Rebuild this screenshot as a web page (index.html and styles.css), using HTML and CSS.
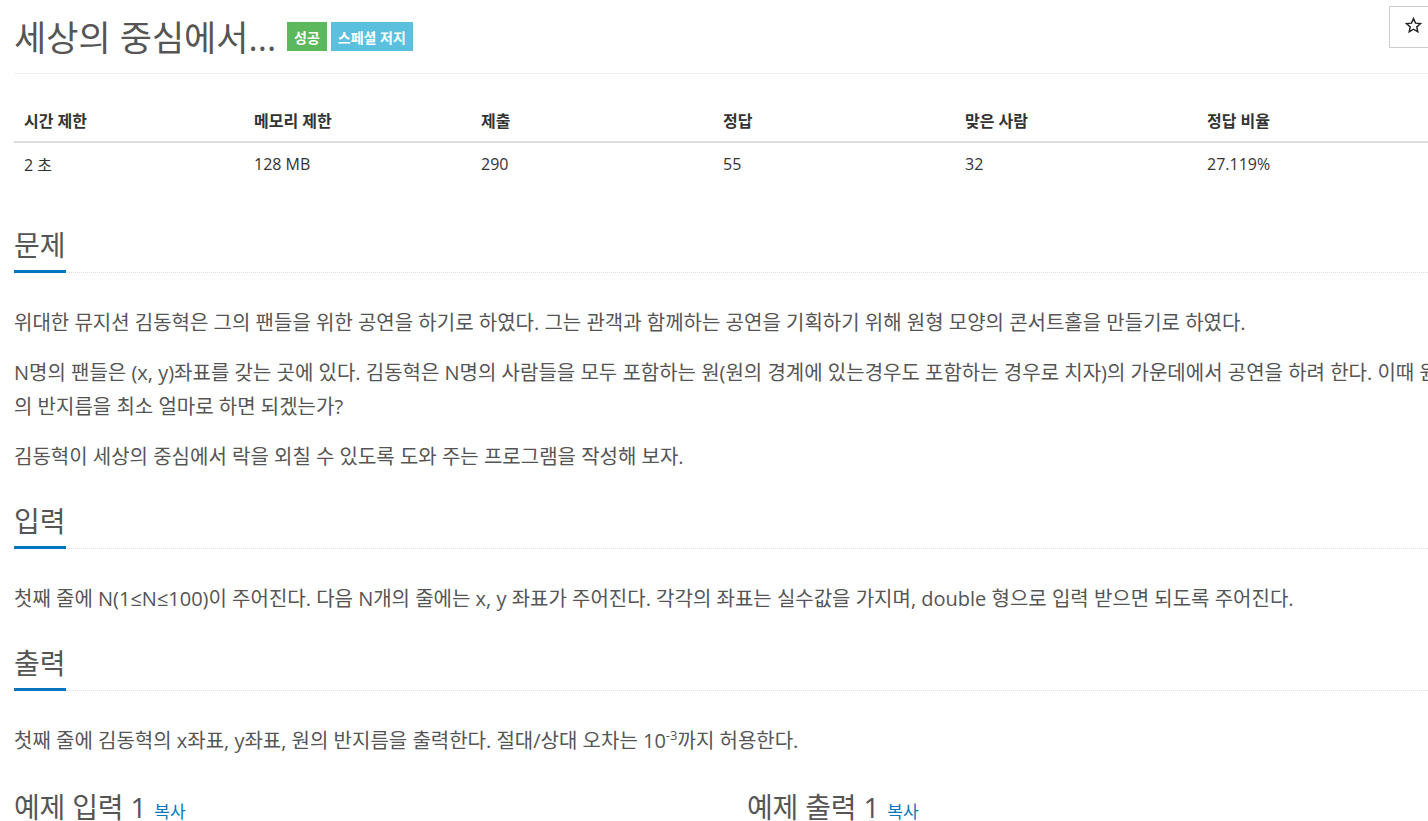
FILE: index.html
```html
<!DOCTYPE html>
<html lang="ko">
<head>
<meta charset="utf-8">
<title>세상의 중심에서...</title>
<link rel="stylesheet" href="styles.css">
</head>
<body>
<div class="page">
  <div class="page-header">
    <h1 class="title">세상의 중심에서...</h1>
    <span class="label label-success">성공</span>
    <span class="label label-info">스페셜 저지</span>
    <button class="star-btn" type="button" aria-label="즐겨찾기">
      <svg class="star-icon" width="17" height="17" viewBox="0 0 24 24" aria-hidden="true">
        <path d="M12 2.2 L14.9 8.6 L21.8 9.3 L16.6 14 L18.1 20.9 L12 17.3 L5.9 20.9 L7.4 14 L2.2 9.3 L9.1 8.6 Z" fill="none" stroke="#222" stroke-width="2" stroke-linejoin="miter"/>
      </svg>
    </button>
  </div>

  <table class="info-table">
    <thead>
      <tr>
        <th class="c1">시간 제한</th>
        <th class="c2">메모리 제한</th>
        <th class="c3">제출</th>
        <th class="c4">정답</th>
        <th class="c5">맞은 사람</th>
        <th class="c6">정답 비율</th>
      </tr>
    </thead>
    <tbody>
      <tr>
        <td>2 초</td>
        <td>128 MB</td>
        <td>290</td>
        <td>55</td>
        <td>32</td>
        <td>27.119%</td>
      </tr>
    </tbody>
  </table>

  <section class="section">
    <div class="headline first"><h2><span>문제</span></h2></div>
    <div class="text">
      <p>위대한 뮤지션 김동혁은 그의 팬들을 위한 공연을 하기로 하였다. 그는 관객과 함께하는 공연을 기획하기 위해 원형 모양의 콘서트홀을 만들기로 하였다.</p>
      <p>N명의 팬들은 (x, y)좌표를 갖는 곳에 있다. 김동혁은 N명의 사람들을 모두 포함하는 원(원의 경계에 있는경우도 포함하는 경우로 치자)의 가운데에서 공연을 하려 한다. 이때 원의 반지름을 최소 얼마로 하면 되겠는가?</p>
      <p>김동혁이 세상의 중심에서 락을 외칠 수 있도록 도와 주는 프로그램을 작성해 보자.</p>
    </div>
  </section>

  <section class="section">
    <div class="headline"><h2><span>입력</span></h2></div>
    <div class="text">
      <p>첫째 줄에 N(1≤N≤100)이 주어진다. 다음 N개의 줄에는 x, y 좌표가 주어진다. 각각의 좌표는 실수값을 가지며, double 형으로 입력 받으면 되도록 주어진다.</p>
    </div>
  </section>

  <section class="section">
    <div class="headline"><h2><span>출력</span></h2></div>
    <div class="text">
      <p>첫째 줄에 김동혁의 x좌표, y좌표, 원의 반지름을 출력한다. 절대/상대 오차는 10<sup>-3</sup>까지 허용한다.</p>
    </div>
  </section>

  <div class="samples">
    <section class="sample">
      <div class="headline"><h2>예제 입력 1 <a class="copy" href="#">복사</a></h2></div>
      <pre class="sample-data">4
0 0
1 1
0 1
1 0</pre>
    </section>
    <section class="sample">
      <div class="headline"><h2>예제 출력 1 <a class="copy" href="#">복사</a></h2></div>
      <pre class="sample-data">0.500 0.500 0.707</pre>
    </section>
  </div>
</div>
</body>
</html>
```

FILE: styles.css
```css
html {
  overflow: hidden;
}

body {
  margin: 0;
  background: #fff;
  color: #555;
  font-family: "Open Sans", "Noto Sans CJK KR", sans-serif;
  font-size: 14px;
}

.page {
  width: 1436px;
  padding: 0 0 0 14px;
}

.page-header {
  display: flex;
  align-items: center;
  height: 73px;
  border-bottom: 1px solid #eee;
}

.title {
  margin: 0 11px 0 0;
  font-size: 35px;
  font-weight: 400;
  color: #555;
  line-height: 1;
  padding-top: 2px;
}

.label {
  display: inline-flex;
  align-items: center;
  height: 29px;
  padding: 0 7px;
  margin-right: 4px;
  color: #fff;
  font-size: 14px;
  font-weight: 700;
}

.label-success {
  background: #5cb85c;
}

.label-info {
  background: #5bc0de;
}

.star-btn {
  margin-left: auto;
  margin-right: 13px;
  align-self: flex-start;
  margin-top: 6px;
  width: 48px;
  height: 42px;
  border: 1px solid #ccc;
  background: #fff;
  padding: 0 0 4px 0;
  display: flex;
  align-items: center;
  justify-content: center;
}

.star-icon {
  display: block;
}

.info-table {
  width: 1436px;
  border-collapse: collapse;
  margin-top: 25px;
  color: #333;
  font-size: 16px;
  table-layout: fixed;
}

.info-table th,
.info-table td {
  text-align: left;
  padding: 0 10px;
  vertical-align: middle;
}

.info-table th {
  height: 42px;
  font-weight: 700;
  border-bottom: 2px solid #ddd;
}

.info-table td {
  height: 42px;
}

.c1 { width: 210px; }
.c2 { width: 207px; }
.c3 { width: 222px; }
.c4 { width: 222px; }
.c5 { width: 222px; }
.c6 { width: 233px; }

.headline {
  margin-top: 29px;
}

.headline.first {
  margin-top: 42px;
}

.headline h2 {
  margin: 0;
  font-size: 28px;
  font-weight: 400;
  color: #555;
  line-height: 36px;
  border-bottom: 1px dotted #ddd;
}

.headline h2 span {
  display: inline-block;
  padding-bottom: 7px;
  border-bottom: 3px solid #0076c0;
  margin-bottom: -1px;
}

.text {
  padding-top: 33px;
}

.text p {
  margin: 0 0 16px 0;
  font-size: 20px;
  line-height: 34px;
  color: #555;
}

.text sup {
  font-size: 13px;
  line-height: 0;
  vertical-align: 8px;
}

.samples {
  display: grid;
  grid-template-columns: 1fr 1fr;
  column-gap: 30px;
}

.sample .headline {
  margin-top: 15px;
}

.sample .headline h2 {
  letter-spacing: -0.2px;
}

.copy {
  font-size: 17px;
  letter-spacing: 0;
  color: #0076c0;
  text-decoration: none;
  margin-left: 1px;
}

.sample-data {
  margin: 10px 0;
  padding: 10px;
  background: #f5f5f5;
  border: 1px solid #ccc;
}
```
